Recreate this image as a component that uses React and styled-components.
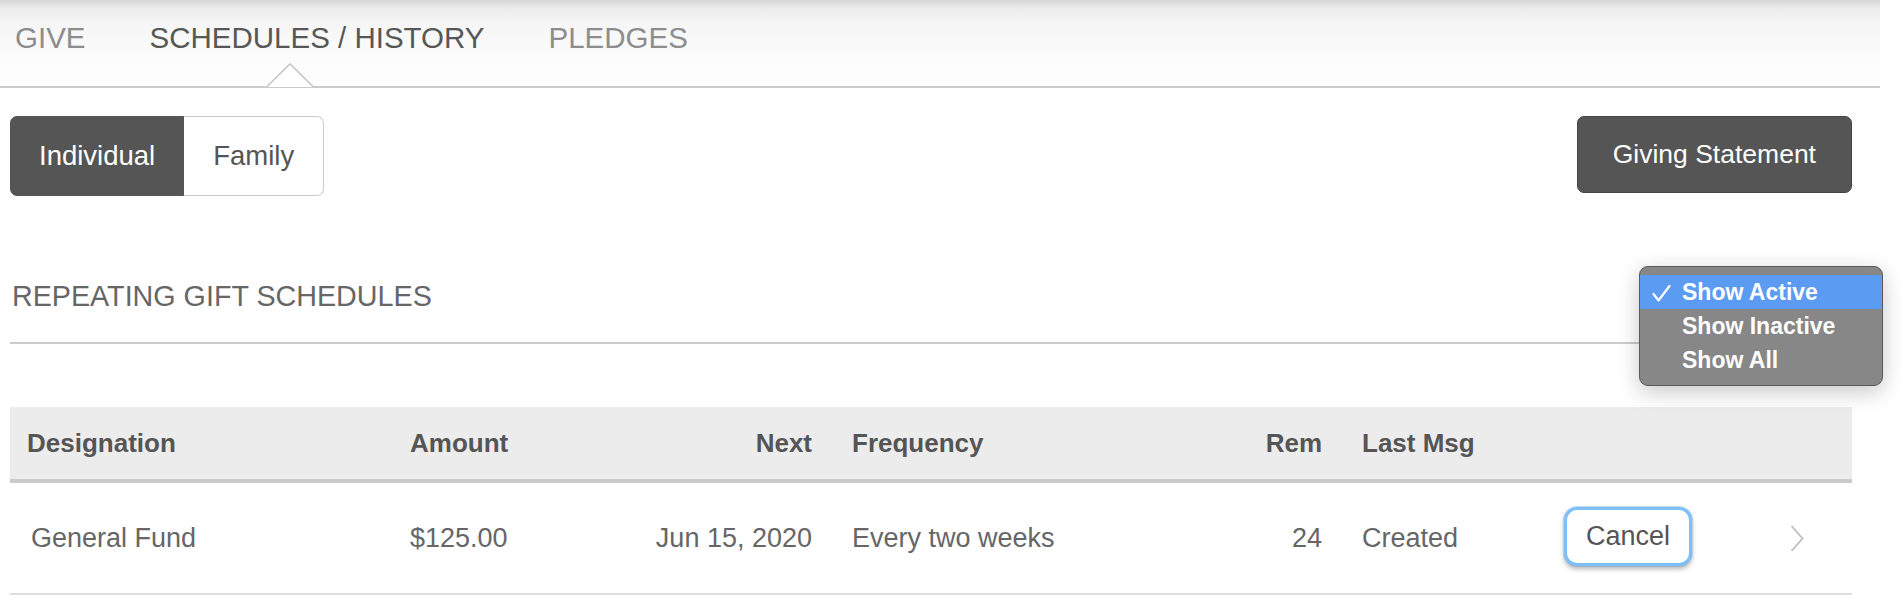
import React from 'react';
import styled, { createGlobalStyle } from 'styled-components';

const FONT = '"Liberation Sans", Arial, sans-serif';

const GlobalStyle = createGlobalStyle`
  html, body {
    margin: 0;
    padding: 0;
    background: #fff;
    font-family: ${FONT};
  }
`;

const Page = styled.div`
  width: 1900px;
  height: 616px;
  overflow: hidden;
  position: relative;
`;

const TabBar = styled.nav`
  width: 1880px;
  height: 88px;
  box-sizing: border-box;
  border-bottom: 2px solid #cbcbcb;
  background: linear-gradient(to bottom, #d6d6d6 0px, #ebebeb 8px, #f5f5f5 22px, #fbfbfb 50px, #fefefe 87px);
  display: flex;
  align-items: flex-start;
  gap: 64px;
  padding-left: 15px;
  position: relative;
`;

const Tab = styled.div`
  height: 75px;
  display: flex;
  align-items: center;
  font-size: 29.5px;
  color: ${p => (p.active ? '#575757' : '#8d8d8d')};
`;

const Caret = styled.svg`
  position: absolute;
  left: 267px;
  bottom: -2px;
`;

const Content = styled.main`
  padding: 0 48px 0 10px;
`;

const TopRow = styled.div`
  display: flex;
  justify-content: space-between;
  align-items: flex-start;
  margin-top: 28px;
`;

const Toggle = styled.div`
  display: flex;
`;

const ToggleButton = styled.button`
  height: 80px;
  padding: 0 ${p => (p.first ? 28 : 29)}px;
  font-family: ${FONT};
  font-size: 27.5px;
  border: 1px solid ${p => (p.active ? '#555' : '#cdcdcd')};
  background: ${p => (p.active ? '#555' : '#fff')};
  color: ${p => (p.active ? '#fff' : '#555')};
  border-radius: ${p => (p.first ? '7px 0 0 7px' : '0 7px 7px 0')};
  ${p => (!p.first ? 'border-left: none;' : '')}
  cursor: pointer;
`;

const DarkButton = styled.button`
  height: 77px;
  padding: 0 35px;
  font-family: ${FONT};
  font-size: 26.5px;
  background: #555;
  color: #fff;
  border: 1px solid #444;
  border-radius: 7px;
  cursor: pointer;
`;

const SectionHead = styled.div`
  position: relative;
  margin-top: 82px;
  padding: 0 0 28px 2px;
  border-bottom: 2px solid #cbcbcb;
`;

const SectionTitle = styled.h2`
  margin: 0;
  font-size: 28.7px;
  line-height: 36px;
  font-weight: 400;
  color: #666;
`;

const Menu = styled.ul`
  position: absolute;
  right: -31px;
  top: -12px;
  width: 242px;
  margin: 0;
  padding: 8px 0;
  list-style: none;
  background: #878787;
  border: 1px solid #5a5a5a;
  border-radius: 9px;
  box-shadow: 0 6px 22px rgba(0, 0, 0, 0.22);
  z-index: 5;
`;

const MenuItem = styled.li`
  height: 34px;
  display: flex;
  align-items: center;
  padding-left: 42px;
  position: relative;
  font-family: ${FONT};
  font-size: 23px;
  font-weight: 700;
  color: #fff;
  background: ${p => (p.selected ? '#5b9bf2' : 'transparent')};
`;

const Check = styled.svg`
  position: absolute;
  left: 12px;
  top: 10px;
`;

const Table = styled.div`
  margin-top: 63px;
  display: grid;
  grid-template-columns: 380px 210px 232px 318px 192px 202px 216px 92px;
`;

const HeadCell = styled.div`
  height: 72px;
  background: #ececec;
  border-bottom: 4px solid #cbcbcb;
  display: flex;
  align-items: center;
  justify-content: ${p => (p.right ? 'flex-end' : 'flex-start')};
  padding: 0 20px 0 ${p => p.pl || 20}px;
  font-size: 26px;
  font-weight: 700;
  color: #555;
`;

const Cell = styled.div`
  height: 110px;
  border-bottom: 2px solid #dedede;
  display: flex;
  align-items: center;
  justify-content: ${p => (p.right ? 'flex-end' : 'flex-start')};
  padding: 0 20px 0 ${p => p.pl || 20}px;
  font-size: 27px;
  color: #666;
`;

const CancelButton = styled.button`
  height: 59px;
  width: 128px;
  margin-top: -4px;
  font-family: ${FONT};
  font-size: 27px;
  color: #555;
  background: #fff;
  border: 3px solid #7ec0f6;
  border-radius: 13px;
  box-shadow: 0 0 0 1px rgba(100, 160, 220, 0.35), 0 3px 5px rgba(0, 0, 0, 0.3);
  cursor: pointer;
`;

const headers = [
  { label: 'Designation', pl: 17 },
  { label: 'Amount' },
  { label: 'Next', right: true },
  { label: 'Frequency' },
  { label: 'Rem', right: true },
  { label: 'Last Msg' },
  { label: '' },
  { label: '' },
];

const Chevron = () => (
  <svg width="14" height="27" viewBox="0 0 14 27">
    <polyline points="1.5,1 12.5,13.5 1.5,26" fill="none" stroke="#bdbdbd" strokeWidth="1.8" />
  </svg>
);

export default function App() {
  return (
    <Page>
      <GlobalStyle />
      <TabBar>
        <Tab>GIVE</Tab>
        <Tab active>SCHEDULES / HISTORY</Tab>
        <Tab>PLEDGES</Tab>
        <Caret width="46" height="25" viewBox="0 0 46 25">
          <polygon points="0,24 23,1 46,24" fill="#fff" />
          <polyline points="0,23.5 23,1 46,23.5" fill="none" stroke="#c4c4c4" strokeWidth="1.6" />
        </Caret>
      </TabBar>

      <Content>
        <TopRow>
          <Toggle>
            <ToggleButton active first>Individual</ToggleButton>
            <ToggleButton>Family</ToggleButton>
          </Toggle>
          <DarkButton>Giving Statement</DarkButton>
        </TopRow>

        <SectionHead>
          <SectionTitle>REPEATING GIFT SCHEDULES</SectionTitle>
          <Menu>
            <MenuItem selected>
              <Check width="19" height="17" viewBox="0 0 19 17">
                <polyline points="1.5,9 6.5,15.5 17.5,1" fill="none" stroke="#fff" strokeWidth="2.2" strokeLinecap="round" strokeLinejoin="round" />
              </Check>
              Show Active
            </MenuItem>
            <MenuItem>Show Inactive</MenuItem>
            <MenuItem>Show All</MenuItem>
          </Menu>
        </SectionHead>

        <Table>
          {headers.map((h, i) => (
            <HeadCell key={i} right={h.right} pl={h.pl}>{h.label}</HeadCell>
          ))}
          <Cell pl={21}>General Fund</Cell>
          <Cell>$125.00</Cell>
          <Cell right>Jun 15, 2020</Cell>
          <Cell>Every two weeks</Cell>
          <Cell right>24</Cell>
          <Cell>Created</Cell>
          <Cell><CancelButton>Cancel</CancelButton></Cell>
          <Cell pl={30}><Chevron /></Cell>
        </Table>
      </Content>
    </Page>
  );
}
